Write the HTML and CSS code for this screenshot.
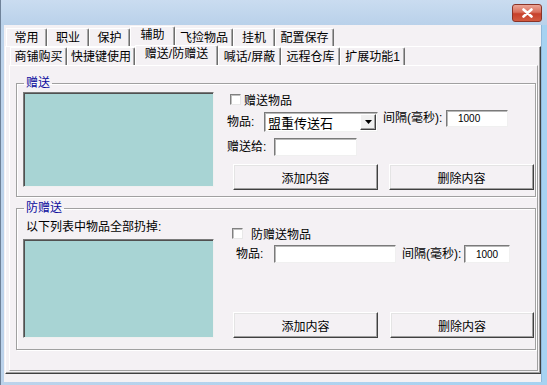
FILE: index.html
```html
<!DOCTYPE html>
<html lang="zh-CN">
<head>
  <meta charset="UTF-8" />
  <title>辅助 - 赠送/防赠送</title>
  <link rel="stylesheet" href="styles.css">
</head>
<body>

  <div class="window">
    <div class="titlebar">
      <div class="close">
        <svg width="13" height="10" viewBox="0 0 13 10">
          <path d="M2.5 1.5 L10.5 8.5 M10.5 1.5 L2.5 8.5" stroke="#fff" stroke-width="2.6" stroke-linecap="round" />
        </svg>
      </div>
    </div>

    <div class="frame">
      <div class="client">

        <div class="tabs tabs-main">
          <div class="tab w41">常用</div>
          <div class="tab w42">职业</div>
          <div class="tab w41">保护</div>
          <div class="tab w45 active">辅助</div>
          <div class="tab w58">飞捡物品</div>
          <div class="tab w42">挂机</div>
          <div class="tab w59">配置保存</div>
        </div>

        <div class="outer">
          <div class="tabs tabs-sub">
            <div class="tab w57">商铺购买</div>
            <div class="tab w68">快捷键使用</div>
            <div class="tab w83 active">赠送/防赠送</div>
            <div class="tab w63">喊话/屏蔽</div>
            <div class="tab w59">远程仓库</div>
            <div class="tab w65">扩展功能1</div>
          </div>

          <div class="page">

            <!-- 赠送 -->
            <fieldset class="group group-give">
              <legend>赠送</legend>
              <div class="group-body">
                <div class="listbox list-give"></div>
                <div class="side">
                  <label class="check check-give"><input type="checkbox"><span>赠送物品</span></label>
                  <div class="row row-item">
                    <span class="lbl lbl-item">物品:</span>
                    <div class="combo">
                      <span class="combo-text">盟重传送石</span>
                      <span class="drop">
                        <svg width="7" height="4" viewBox="0 0 7 4"><path d="M0 0 H7 L3.5 4 Z" fill="#000" /></svg>
                      </span>
                    </div>
                    <span class="lbl lbl-delay">间隔(毫秒):</span>
                    <input class="field num num-give" type="text" value="1000">
                  </div>
                  <div class="row row-to">
                    <span class="lbl lbl-to">赠送给:</span>
                    <input class="field field-to" type="text">
                  </div>
                  <div class="row buttons buttons-give">
                    <button class="btn">添加内容</button>
                    <button class="btn">删除内容</button>
                  </div>
                </div>
              </div>
            </fieldset>

            <!-- 防赠送 -->
            <fieldset class="group group-block">
              <legend>防赠送</legend>
              <div class="group-body">
                <div class="left">
                  <div class="caption">以下列表中物品全部扔掉:</div>
                  <div class="listbox list-block"></div>
                </div>
                <div class="side">
                  <label class="check check-block"><input type="checkbox"><span>防赠送物品</span></label>
                  <div class="row row-item2">
                    <span class="lbl lbl-item2">物品:</span>
                    <input class="field field-item" type="text">
                    <span class="lbl lbl-delay2">间隔(毫秒):</span>
                    <input class="field num num-block" type="text" value="1000">
                  </div>
                  <div class="row buttons buttons-block">
                    <button class="btn">添加内容</button>
                    <button class="btn btn-narrow">删除内容</button>
                  </div>
                </div>
              </div>
            </fieldset>

          </div>
        </div>

      </div>
    </div>
  </div>

</body>
</html>
```

FILE: styles.css
```css
* {
  box-sizing: border-box;
}

body {
  margin: 0;
  background: #fff;
  font-family: "Liberation Sans", "Noto Sans CJK SC", sans-serif;
  font-size: 12px;
  color: #000;
}

.window {
  width: 547px;
  height: 385px;
  display: flex;
  flex-direction: column;
}

.titlebar {
  height: 25px;
  display: flex;
  justify-content: flex-end;
  padding: 4px 5px 0 0;
  background: linear-gradient(#cadcf0, #b9d1ea);
  border-left: 1px solid #6f8299;
}

.close {
  width: 30px;
  height: 18px;
  border: 1px solid #8a3327;
  border-radius: 3px;
  background: linear-gradient(#eba596 0%, #d9705d 45%, #c7402b 55%, #d25a40 100%);
  display: flex;
  align-items: center;
  justify-content: center;
}

.frame {
  flex: 1;
  display: flex;
  padding: 0 5px 3px 3px;
  border-left: 1px solid #6f8299;
  background: linear-gradient(to right, #bcd3eb, #a6d2f1);
}

.client {
  width: 538px;
  background: #f4f1f4;
  border-right: 1px solid #8fb8da;
}

/* tabs */
.tabs {
  display: flex;
  align-items: flex-end;
}

.tabs-main {
  height: 21px;
  padding-left: 2px;
}

.tabs-sub {
  height: 18px;
  margin-left: 4px;
}

.tab {
  height: 18px;
  padding-top: 2px;
  line-height: 15px;
  text-align: center;
  white-space: nowrap;
  border-top: 1px solid #fff;
  border-left: 1px solid #fff;
  border-right: 1px solid #6e6e6e;
  border-top-right-radius: 2px;
  box-shadow: inset -1px 0 0 #a8a8a8;
  background: #f4f1f4;
}

.tab.active {
  height: 20px;
  padding-top: 1px;
  position: relative;
}

.tabs-sub .tab {
  padding-top: 2px;
}

.tabs-sub .tab.active {
  height: 20px;
  padding-top: 1px;
}

.w41 { width: 41px; }
.w42 { width: 42px; }
.w45 { width: 45px; }
.w57 { width: 57px; }
.w58 { width: 58px; }
.w59 { width: 59px; }
.w63 { width: 63px; }
.w65 { width: 65px; }
.w68 { width: 68px; }
.w83 { width: 83px; }

.outer {
  margin-left: 1px;
  height: 328px;
  border-top: 1px solid #fff;
  border-left: 1px solid #fff;
  border-right: 1px solid #404040;
  border-bottom: 1px solid #404040;
  box-shadow: inset -1px -1px 0 #a0a0a0;
}

.page {
  margin: 0 2px 0 3px;
  height: 306px;
  border-top: 1px solid #fff;
  border-left: 1px solid #fff;
  border-right: 1px solid #a0a0a0;
  border-bottom: 1px solid #a0a0a0;
}

/* group boxes */
.group {
  margin: 10px 1px 0 6px;
  padding: 2px 0 6px 6px;
  border: 1px solid #a0a0a0;
  box-shadow: 1px 1px 0 #fff, inset 1px 1px 0 #fff;
  min-width: 0;
}

.group legend {
  margin-left: 1px;
  padding: 0 2px;
  line-height: 14px;
  color: #0a0a9c;
}

.group-block {
  margin-top: 4px;
  padding-bottom: 11px;
}

.group-body {
  display: flex;
  align-items: flex-start;
}

.listbox {
  width: 191px;
  background: #a8d4d4;
  border: 1px solid;
  border-color: #7a7a7a #f0f0f0 #f0f0f0 #7a7a7a;
  box-shadow: inset 1px 1px 0 #505050;
}

.list-give {
  height: 95px;
}

.list-block {
  height: 99px;
  margin-top: 5px;
}

.caption {
  margin: 3px 0 0 3px;
  line-height: 14px;
}

.side {
  margin-left: 13px;
  flex: 1;
}

.row {
  display: flex;
  align-items: flex-start;
}

.lbl {
  white-space: nowrap;
}

/* checkbox */
.check {
  display: flex;
  align-items: center;
  height: 14px;
}

.check input {
  appearance: none;
  margin: 0;
  width: 11px;
  height: 11px;
  background: #fff;
  border: 1px solid;
  border-color: #808080 #e8e8e8 #e8e8e8 #808080;
  box-shadow: inset 1px 1px 0 #c0c0c0;
}

.check-give input {
  margin: 0 3px 0 3px;
}

.check-block {
  margin-top: 9px;
}

.check-block input {
  margin: 0 8px 0 5px;
}

/* inputs */
.field {
  margin: 0;
  padding: 0 3px;
  height: 18px;
  font: inherit;
  background: #fff;
  border: 1px solid;
  border-color: #7a7a7a #f0f0f0 #f0f0f0 #7a7a7a;
  box-shadow: inset 1px 1px 0 #b8b8b8;
  outline: none;
}

.num {
  font-family: "Liberation Sans", sans-serif;
  font-size: 10px;
}

/* 赠送 rows */
.row-item {
  margin-top: 4px;
}

.lbl-item {
  width: 37px;
  margin-top: 2px;
  line-height: 20px;
}

.combo {
  margin-top: 2px;
  width: 114px;
  height: 20px;
  display: flex;
  align-items: center;
  justify-content: space-between;
  background: #fff;
  border: 1px solid;
  border-color: #7a7a7a #f0f0f0 #f0f0f0 #7a7a7a;
  box-shadow: inset 1px 1px 0 #b8b8b8;
  padding: 0 1px 0 3px;
}

.combo-text {
  font-size: 13px;
}

.drop {
  width: 16px;
  height: 16px;
  display: flex;
  align-items: center;
  justify-content: center;
  background: #f0f0f0;
  border: 1px solid;
  border-color: #fff #404040 #404040 #fff;
  box-shadow: inset -1px -1px 0 #a0a0a0;
}

.lbl-delay {
  margin-left: 5px;
  width: 63px;
  line-height: 17px;
}

.num-give {
  width: 62px;
  height: 17px;
  padding-left: 11px;
}

.row-to {
  margin-top: 6px;
}

.lbl-to {
  width: 47px;
  line-height: 18px;
}

.field-to {
  width: 83px;
}

.buttons {
  margin-top: 8px;
  padding-left: 6px;
  gap: 11px;
}

.btn {
  width: 145px;
  height: 26px;
  padding: 0;
  font: inherit;
  color: #000;
  background: #f4f1f4;
  border: 1px solid;
  border-color: #fff #404040 #404040 #fff;
  box-shadow: inset -1px -1px 0 #a0a0a0, inset 1px 1px 0 #e4e4e4;
}

/* 防赠送 rows */
.row-item2 {
  margin-top: 5px;
}

.lbl-item2 {
  margin-left: 9px;
  width: 38px;
  line-height: 18px;
}

.field-item {
  width: 122px;
}

.lbl-delay2 {
  margin-left: 6px;
  width: 62px;
  line-height: 18px;
}

.num-block {
  width: 46px;
  text-align: center;
}

.buttons-block {
  margin-top: 49px;
  gap: 12px;
}

.btn-narrow {
  width: 144px;
}
```
